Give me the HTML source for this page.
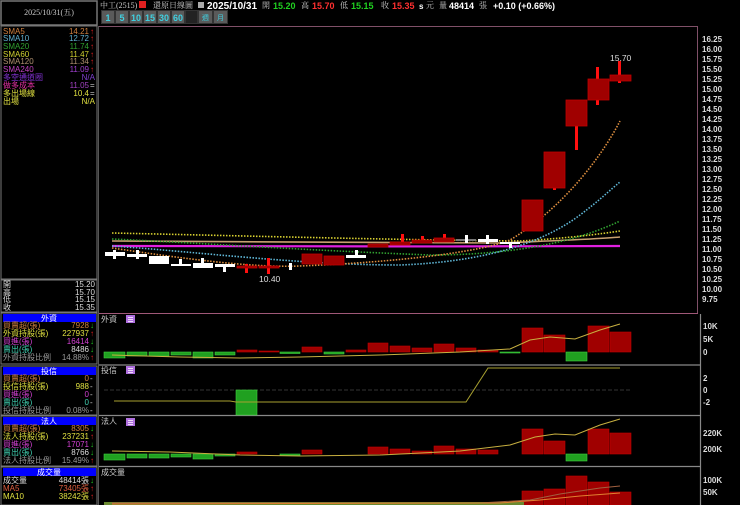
<!DOCTYPE html>
<html><head><meta charset="utf-8"><style>
body{margin:0;background:#000;width:740px;height:505px;overflow:hidden;font-family:"Liberation Sans","Noto Sans CJK TC",sans-serif}
svg{display:block}
text{font-family:"Liberation Sans","Noto Sans CJK TC",sans-serif}
.s{font-family:"Liberation Serif","Noto Serif CJK SC",serif;font-size:8px}
.ax{font-size:8px;fill:#ddd;font-weight:bold;font-family:"DejaVu Sans",sans-serif}
.ar{font-family:"DejaVu Sans",sans-serif;font-size:8px;font-weight:bold}
</style></head><body>
<svg width="740" height="505" viewBox="0 0 740 505" xmlns="http://www.w3.org/2000/svg">
<rect width="740" height="505" fill="#000"/>
<rect x="1" y="1" width="96" height="24" fill="#000" stroke="#777" stroke-width="1.5"/>
<text x="49" y="15" class="s" fill="#ccc" text-anchor="middle">2025/10/31(五)</text>
<rect x="1" y="26" width="96" height="253" fill="none" stroke="#777"/>
<rect x="1" y="280" width="96" height="32" fill="none" stroke="#777"/>
<rect x="1" y="313" width="96" height="51" fill="none" stroke="#777"/>
<rect x="1" y="366" width="96" height="49" fill="none" stroke="#777"/>
<rect x="1" y="416" width="96" height="50" fill="none" stroke="#777"/>
<rect x="1" y="467" width="96" height="38" fill="none" stroke="#777"/>
<g class="s">
<text x="3" y="34" fill="#d08040">SMA5</text><text x="89" y="34" fill="#d08040" text-anchor="end">14.21</text>
<text x="3" y="41" fill="#60b0d0">SMA10</text><text x="89" y="41" fill="#60b0d0" text-anchor="end">12.72</text>
<text x="3" y="49" fill="#30a030">SMA20</text><text x="89" y="49" fill="#30a030" text-anchor="end">11.74</text>
<text x="3" y="57" fill="#d0d030">SMA60</text><text x="89" y="57" fill="#d0d030" text-anchor="end">11.47</text>
<text x="3" y="64" fill="#b09070">SMA120</text><text x="89" y="64" fill="#b09070" text-anchor="end">11.34</text>
<text x="3" y="72" fill="#c040c0">SMA240</text><text x="89" y="72" fill="#a040d0" text-anchor="end">11.09</text>
<text x="3" y="80" fill="#8030d0">多空通道圈</text><text x="95" y="80" fill="#8040d0" text-anchor="end">N/A</text>
<text x="3" y="88" fill="#e030a0">做多成本</text><text x="89" y="88" fill="#a040c0" text-anchor="end">11.05</text><text x="90" y="88" fill="#ccc">=</text>
<text x="3" y="96" fill="#e0e040">多出場線</text><text x="89" y="96" fill="#e0e040" text-anchor="end">10.4</text><text x="90" y="96" fill="#ccc">=</text>
<text x="3" y="104" fill="#e0e040">出場</text><text x="95" y="104" fill="#e0e040" text-anchor="end">N/A</text>
</g>
<g fill="#e02020" class="ar"><text x="90" y="34">↑</text><text x="90" y="41">↑</text><text x="90" y="49">↑</text><text x="90" y="57">↑</text><text x="90" y="64">↑</text><text x="90" y="72">↑</text></g>
<g class="s" fill="#ddd">
<text x="3" y="287">開</text><text x="95" y="287" text-anchor="end">15.20</text>
<text x="3" y="295">高</text><text x="95" y="295" text-anchor="end">15.70</text>
<text x="3" y="302">低</text><text x="95" y="302" text-anchor="end">15.15</text>
<text x="3" y="310">收</text><text x="95" y="310" text-anchor="end">15.35</text>
</g>
<rect x="3" y="314" width="93" height="8" fill="#0000ff"/>
<g class="s">
<text x="49" y="321" fill="#fff" text-anchor="middle">外資</text>
<text x="3" y="328" fill="#d08040">買賣超(張)</text><text x="89" y="328" fill="#d08040" text-anchor="end">7928</text>
<text x="3" y="336" fill="#e0e040">外資持股(張)</text><text x="89" y="336" fill="#e0e040" text-anchor="end">227937</text>
<text x="3" y="344" fill="#d040d0">買進(張)</text><text x="89" y="344" fill="#d040d0" text-anchor="end">16414</text>
<text x="3" y="352" fill="#40d0b0">賣出(張)</text><text x="89" y="352" fill="#ddd" text-anchor="end">8486</text>
<text x="3" y="360" fill="#999">外資持股比例</text><text x="89" y="360" fill="#999" text-anchor="end">14.88%</text>
</g>
<g class="ar"><text x="90" y="328" fill="#20c020">↓</text><text x="90" y="336" fill="#e02020">↑</text><text x="90" y="344" fill="#20c020">↓</text><text x="90" y="352" fill="#20c020">↓</text><text x="90" y="360" fill="#e02020">↑</text></g>
<rect x="3" y="367" width="93" height="8" fill="#0000ff"/>
<g class="s">
<text x="49" y="374" fill="#fff" text-anchor="middle">投信</text>
<text x="3" y="381" fill="#d08040">買賣超(張)</text><text x="89" y="381" fill="#d08040" text-anchor="end">0</text>
<text x="3" y="389" fill="#e0e040">投信持股(張)</text><text x="89" y="389" fill="#e0e040" text-anchor="end">988</text>
<text x="3" y="397" fill="#d040d0">買進(張)</text><text x="89" y="397" fill="#d040d0" text-anchor="end">0</text>
<text x="3" y="405" fill="#40d0b0">賣出(張)</text><text x="89" y="405" fill="#40d0b0" text-anchor="end">0</text>
<text x="3" y="413" fill="#999">投信持股比例</text><text x="89" y="413" fill="#999" text-anchor="end">0.08%</text>
<text x="90" y="381" fill="#ccc">-</text><text x="90" y="389" fill="#ccc">-</text><text x="90" y="397" fill="#ccc">-</text><text x="90" y="405" fill="#ccc">-</text><text x="90" y="413" fill="#ccc">-</text>
</g>
<rect x="3" y="417" width="93" height="8" fill="#0000ff"/>
<g class="s">
<text x="49" y="424" fill="#fff" text-anchor="middle">法人</text>
<text x="3" y="431" fill="#d08040">買賣超(張)</text><text x="89" y="431" fill="#d08040" text-anchor="end">8305</text>
<text x="3" y="439" fill="#e0e040">法人持股(張)</text><text x="89" y="439" fill="#e0e040" text-anchor="end">237231</text>
<text x="3" y="447" fill="#d040d0">買進(張)</text><text x="89" y="447" fill="#d040d0" text-anchor="end">17071</text>
<text x="3" y="455" fill="#40d0b0">賣出(張)</text><text x="89" y="455" fill="#ddd" text-anchor="end">8766</text>
<text x="3" y="463" fill="#999">法人持股比例</text><text x="89" y="463" fill="#999" text-anchor="end">15.49%</text>
</g>
<g class="ar"><text x="90" y="431" fill="#20c020">↓</text><text x="90" y="439" fill="#e02020">↑</text><text x="90" y="447" fill="#20c020">↓</text><text x="90" y="455" fill="#20c020">↓</text><text x="90" y="463" fill="#e02020">↑</text></g>
<rect x="3" y="468" width="93" height="8" fill="#0000ff"/>
<g class="s">
<text x="49" y="475" fill="#fff" text-anchor="middle">成交量</text>
<text x="3" y="483" fill="#ddd">成交量</text><text x="89" y="483" fill="#ddd" text-anchor="end">48414張</text>
<text x="3" y="491" fill="#e06040">MA5</text><text x="89" y="491" fill="#e06040" text-anchor="end">73405張</text>
<text x="3" y="499" fill="#e0e040">MA10</text><text x="89" y="499" fill="#e0e040" text-anchor="end">38242張</text>
</g>
<g class="ar"><text x="90" y="483" fill="#20c020">↓</text><text x="90" y="491" fill="#e02020">↑</text><text x="90" y="499" fill="#e02020">↑</text></g>

<text x="100" y="8" class="s" fill="#ccc">中工(2515)</text>
<rect x="139" y="1" width="7" height="7" fill="#e02020"/>
<text x="153" y="8" class="s" fill="#ccc">還原日線圖</text>
<rect x="198" y="2" width="6" height="6" fill="#aaa"/>
<text x="207" y="9" font-size="10" font-weight="bold" fill="#fff" font-family="DejaVu Sans">2025/10/31</text>
<text x="262" y="8" class="s" fill="#ccc">開</text><text x="273" y="9" font-size="9" font-weight="bold" fill="#20d020" font-family="DejaVu Sans">15.20</text>
<text x="301" y="8" class="s" fill="#ccc">高</text><text x="312" y="9" font-size="9" font-weight="bold" fill="#ff3030" font-family="DejaVu Sans">15.70</text>
<text x="340" y="8" class="s" fill="#ccc">低</text><text x="351" y="9" font-size="9" font-weight="bold" fill="#20d020" font-family="DejaVu Sans">15.15</text>
<text x="381" y="8" class="s" fill="#ccc">收</text><text x="392" y="9" font-size="9" font-weight="bold" fill="#ff3030" font-family="DejaVu Sans">15.35</text>
<text x="419" y="9" font-size="8" font-weight="bold" fill="#fff" font-family="DejaVu Sans">s</text><text x="426" y="8" class="s" fill="#ccc">元</text>
<text x="439" y="8" class="s" fill="#ccc">量</text><text x="449" y="9" font-size="9" font-weight="bold" fill="#fff" font-family="DejaVu Sans">48414</text><text x="479" y="8" class="s" fill="#ccc">張</text>
<text x="493" y="9" font-size="9" font-weight="bold" fill="#fff" font-family="DejaVu Sans">+0.10 (+0.66%)</text>
<g font-size="9" font-weight="bold" fill="#40d0e0" text-anchor="middle" font-family="DejaVu Sans">
<rect x="101" y="10" width="127" height="14" fill="#505050"/>
<rect x="101.5" y="10.5" width="13" height="13" fill="#5a5a5a" stroke="#333"/><text x="108" y="21">1</text>
<rect x="115.5" y="10.5" width="13" height="13" fill="#5a5a5a" stroke="#333"/><text x="122" y="21">5</text>
<rect x="129.5" y="10.5" width="13" height="13" fill="#5a5a5a" stroke="#333"/><text x="136" y="21">10</text>
<rect x="143.5" y="10.5" width="13" height="13" fill="#5a5a5a" stroke="#333"/><text x="150" y="21">15</text>
<rect x="157.5" y="10.5" width="13" height="13" fill="#5a5a5a" stroke="#333"/><text x="164" y="21">30</text>
<rect x="171.5" y="10.5" width="13" height="13" fill="#5a5a5a" stroke="#333"/><text x="178" y="21">60</text>
<rect x="185.5" y="10.5" width="12" height="13" fill="#222" stroke="#333"/>
<rect x="198.5" y="10.5" width="14" height="13" fill="#5a5a5a" stroke="#333"/><text x="205.5" y="20" font-size="7" font-weight="normal">週</text>
<rect x="213.5" y="10.5" width="14" height="13" fill="#5a5a5a" stroke="#333"/><text x="220.5" y="20" font-size="7" font-weight="normal">月</text>
</g>

<path d="M99 26.5H697.5V313" fill="none" stroke="#805068"/>
<line x1="99" y1="313.5" x2="698" y2="313.5" stroke="#a05878"/>
<line x1="98.5" y1="26" x2="98.5" y2="505" stroke="#555"/>
<g class="ax">
<text x="702" y="42">16.25</text><text x="702" y="52">16.00</text><text x="702" y="62">15.75</text><text x="702" y="72">15.50</text><text x="702" y="82">15.25</text><text x="702" y="92">15.00</text><text x="702" y="102">14.75</text><text x="702" y="112">14.50</text><text x="702" y="122">14.25</text><text x="702" y="132">14.00</text><text x="702" y="142">13.75</text><text x="702" y="152">13.50</text><text x="702" y="162">13.25</text><text x="702" y="172">13.00</text><text x="702" y="182">12.75</text><text x="702" y="192">12.50</text><text x="702" y="202">12.25</text><text x="702" y="212">12.00</text><text x="702" y="222">11.75</text><text x="702" y="232">11.50</text><text x="702" y="242">11.25</text><text x="702" y="252">11.00</text><text x="702" y="262">10.75</text><text x="702" y="272">10.50</text><text x="702" y="282">10.25</text><text x="702" y="292">10.00</text><text x="702" y="302">9.75</text>
</g>
<path d="M112 233 C250 236 400 240 520 241 C570 238 600 234 620 231" fill="none" stroke="#d8d030" stroke-width="1.6" stroke-dasharray="1.5 1.5"/>
<path d="M112 241 C250 242 400 242 500 243 C570 240 600 239 620 237" fill="none" stroke="#c8a070" stroke-width="1.6"/>
<path d="M112 246 C250 246 450 247 620 246" fill="none" stroke="#e020e0" stroke-width="2.2"/>
<path d="M112 239 C200 243 300 250 430 255 C520 255 580 240 620 221" fill="none" stroke="#30a030" stroke-width="1.6" stroke-dasharray="1.5 1.5"/>
<path d="M112 246 C200 252 300 265 400 265 C480 262 540 245 580 215 C600 200 610 190 620 182" fill="none" stroke="#60b8d8" stroke-width="1.6" stroke-dasharray="1.5 1.5"/>
<path d="M112 248 C180 258 250 268 300 266 C400 262 480 252 510 240 C560 210 600 160 620 121" fill="none" stroke="#e09040" stroke-width="1.6" stroke-dasharray="1.5 1.5"/>
<g fill="#fff">
<rect x="105" y="252" width="20" height="4"/><rect x="113" y="250" width="3" height="9"/>
<rect x="127" y="254" width="20" height="3"/><rect x="136" y="250" width="3" height="9"/>
<rect x="149" y="256" width="20" height="8"/>
<rect x="171" y="264" width="20" height="2"/><rect x="179" y="259" width="3" height="6"/>
<rect x="193" y="263" width="20" height="5"/><rect x="201" y="258" width="3" height="6"/>
<rect x="215" y="264" width="20" height="3"/><rect x="223" y="264" width="3" height="8"/>
<rect x="289" y="263" width="3" height="7"/>
<rect x="346" y="255" width="20" height="3"/><rect x="355" y="250" width="3" height="8"/>
<rect x="478" y="239" width="20" height="3"/><rect x="486" y="235" width="3" height="9"/>
<rect x="500" y="242" width="20" height="2"/><rect x="509" y="242" width="3" height="6"/>
</g>
<rect x="456" y="239" width="20" height="2" fill="#777"/><rect x="465" y="235" width="3" height="8" fill="#fff"/>
<g fill="#ff1010">
<rect x="245" y="264" width="3" height="9"/>
<rect x="267" y="258" width="3" height="16"/>
<rect x="401" y="234" width="3" height="11"/>
<rect x="421" y="236" width="3" height="7"/>
<rect x="443" y="234" width="3" height="7"/>
<rect x="596" y="67" width="3" height="38"/>
<rect x="575" y="125" width="3" height="25"/>
<rect x="553" y="186" width="3" height="4"/>
<rect x="618" y="61" width="3" height="22"/>
</g>
<g fill="#a00000" stroke="#c00000" stroke-width="0.8">
<rect x="237" y="266" width="20" height="2"/>
<rect x="259" y="266" width="20" height="2"/>
<rect x="302" y="254" width="20" height="10"/>
<rect x="324" y="256" width="20" height="9"/>
<rect x="368" y="244" width="20" height="3"/>
<rect x="390" y="242" width="20" height="3"/>
<rect x="412" y="240" width="20" height="3"/>
<rect x="434" y="238" width="20" height="4"/>
<rect x="522" y="200" width="21" height="31"/>
<rect x="544" y="152" width="21" height="36"/>
<rect x="566" y="100" width="21" height="26"/>
<rect x="588" y="79" width="21" height="21"/>
<rect x="610" y="75" width="21" height="6"/>
</g>
<text x="259" y="282" font-size="8.5" fill="#ddd" font-family="DejaVu Sans">10.40</text>
<text x="610" y="61" font-size="8.5" fill="#ddd" font-family="DejaVu Sans">15.70</text>

<g stroke="#888" stroke-width="1.2">
<line x1="99" y1="365" x2="700" y2="365"/>
<line x1="99" y1="415.5" x2="700" y2="415.5"/>
<line x1="99" y1="466.5" x2="700" y2="466.5"/>
<line x1="700.5" y1="314" x2="700.5" y2="505"/>
</g>
<g class="s" fill="#ccc"><text x="101" y="322">外資</text><text x="101" y="373">投信</text><text x="101" y="424">法人</text><text x="101" y="475">成交量</text></g>
<g fill="#b070e0"><rect x="126" y="315" width="9" height="8"/><rect x="126" y="366" width="9" height="8"/><rect x="126" y="418" width="9" height="8"/></g>
<g stroke="#fff" stroke-width="0.8"><path d="M128 317.5h5M128 319.5h5M128 321.5h5M128 368.5h5M128 370.5h5M128 372.5h5M128 420.5h5M128 422.5h5M128 424.5h5"/></g>
<g class="ax"><text x="703" y="329">10K</text><text x="703" y="342">5K</text><text x="703" y="355">0</text>
<text x="703" y="381">2</text><text x="703" y="393">0</text><text x="703" y="405">-2</text>
<text x="703" y="436">220K</text><text x="703" y="452">200K</text>
<text x="703" y="483">100K</text><text x="703" y="495">50K</text></g>

<g fill="#20a020" stroke="#40d040" stroke-width="0.6">
<rect x="104" y="352" width="21" height="6"/><rect x="127" y="352" width="20" height="4"/><rect x="149" y="352" width="20" height="4"/><rect x="171" y="352" width="20" height="3"/><rect x="193" y="352" width="20" height="6"/><rect x="215" y="352" width="20" height="3"/><rect x="280" y="352" width="20" height="1.5"/><rect x="324" y="352" width="20" height="2"/><rect x="500" y="352" width="20" height="1"/><rect x="566" y="352" width="21" height="9"/>
</g>
<g fill="#a00000" stroke="#c00000" stroke-width="0.6">
<rect x="237" y="350" width="20" height="2"/><rect x="259" y="351" width="20" height="1"/><rect x="302" y="347" width="20" height="5"/><rect x="346" y="350" width="20" height="2"/><rect x="368" y="343" width="20" height="9"/><rect x="390" y="346" width="20" height="6"/><rect x="412" y="348" width="20" height="4"/><rect x="434" y="344" width="20" height="8"/><rect x="456" y="348" width="20" height="4"/><rect x="478" y="350" width="20" height="2"/>
<rect x="522" y="328" width="21" height="24"/><rect x="544" y="335" width="21" height="17"/><rect x="588" y="326" width="21" height="26"/><rect x="610" y="332" width="21" height="20"/>
</g>
<path d="M112 355 L180 357 L240 358 L300 357 L380 355 L460 352 L510 349 L530 340 L550 337 L575 339 L600 330 L620 324" fill="none" stroke="#c8b040" stroke-width="1"/>
<line x1="104" y1="390" x2="630" y2="390" stroke="#333" stroke-dasharray="4 2"/>
<rect x="236" y="390" width="21" height="25" fill="#20a020" stroke="#40d040" stroke-width="0.6"/>
<path d="M114 401 H230 L236 402 H466 L488 368 H620" fill="none" stroke="#a8a030" stroke-width="1"/>
<g fill="#20a020" stroke="#40d040" stroke-width="0.6">
<rect x="104" y="454" width="21" height="6"/><rect x="127" y="454" width="20" height="4"/><rect x="149" y="454" width="20" height="4"/><rect x="171" y="454" width="20" height="3"/><rect x="193" y="454" width="20" height="5"/><rect x="215" y="454" width="20" height="2"/><rect x="280" y="454" width="20" height="1.5"/><rect x="566" y="454" width="21" height="7"/>
</g>
<g fill="#a00000" stroke="#c00000" stroke-width="0.6">
<rect x="237" y="452" width="20" height="2"/><rect x="302" y="450" width="20" height="4"/><rect x="368" y="447" width="20" height="7"/><rect x="390" y="449" width="20" height="5"/><rect x="412" y="451" width="20" height="3"/><rect x="434" y="446" width="20" height="8"/><rect x="456" y="449" width="20" height="5"/><rect x="478" y="450" width="20" height="4"/>
<rect x="522" y="429" width="21" height="25"/><rect x="544" y="441" width="21" height="13"/><rect x="588" y="429" width="21" height="25"/><rect x="610" y="433" width="21" height="21"/>
</g>
<path d="M112 451 L170 452 L240 455 L300 456 L380 455 L460 451 L510 445 L535 437 L555 434 L575 435 L600 425 L620 419" fill="none" stroke="#c8b040" stroke-width="1"/>
<g fill="#a00000" stroke="#c00000" stroke-width="0.6">
<rect x="522" y="491" width="21" height="14"/><rect x="544" y="489" width="21" height="16"/><rect x="566" y="476" width="21" height="29"/><rect x="588" y="482" width="21" height="23"/><rect x="610" y="492" width="21" height="13"/>
</g>
<g fill="#6a8a30"><rect x="104" y="502" width="420" height="3"/></g>
<path d="M112 503 L480 503 L530 500 L560 494 L600 488 L620 486" fill="none" stroke="#a06040" stroke-width="1"/>
<path d="M112 504 L500 503 L540 500 L580 496 L620 493" fill="none" stroke="#e08030" stroke-width="1"/>
</svg>
</body></html>
